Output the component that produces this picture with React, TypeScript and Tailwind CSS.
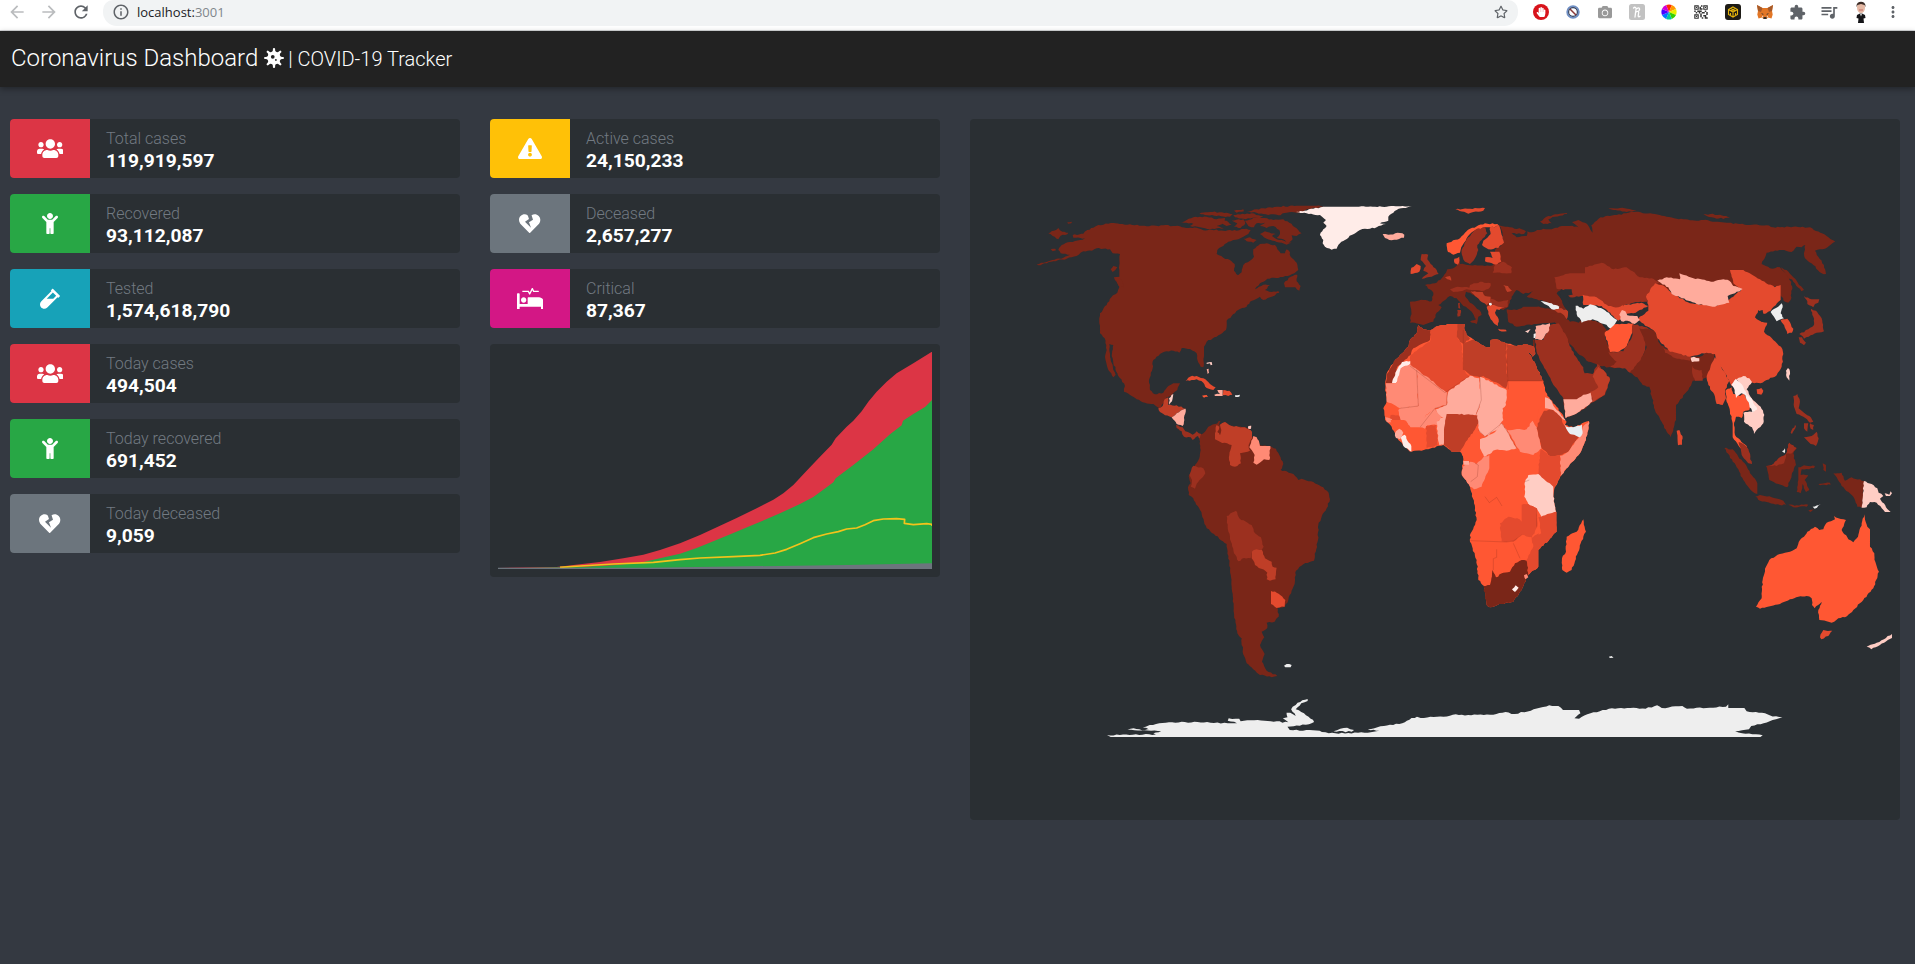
import React from "react";
import {
  FaUsers,
  FaChild,
  FaVial,
  FaHeartBroken,
  FaExclamationTriangle,
  FaProcedures,
  FaVirus,
  FaRegStar,
  FaCamera,
  FaHandPaper,
} from "react-icons/fa";
import { MdArrowBack, MdArrowForward, MdRefresh, MdInfoOutline, MdMoreVert, MdQueueMusic, MdQrCode2, MdExtension } from "react-icons/md";

const A = "#7a2618";
const B = "#9c301f";
const C = "#bf3e27";
const D = "#e44a2e";
const E = "#ff5733";
const F = "#ff8a75";
const G = "#ffab9c";
const H = "#ffcdc4";
const I = "#ffece8";
const W = "#eeeeee";
const SEA = "#2a2f33";

type Shape = [fill: string, points: string];
type Zone = { x: number; y: number; k: string; shapes: Shape[] };

const zones: Zone[] = [
  {
    x: 1030, y: 190, k: "0.3333",
    shapes: [
      [A, "85,180 95,165 120,156 150,150 165,145 130,143 128,135 160,131 172,120 190,113 205,105 250,99 270,102 300,103 350,109 400,106 450,109 475,114 500,113 520,121 545,119 580,122 600,120 620,122 650,116 662,120 655,132 640,140 625,148 595,155 575,170 562,180 560,192 580,203 600,210 614,222 612,242 624,256 635,247 640,225 660,212 672,200 670,178 690,162 710,160 735,165 742,178 752,190 765,190 770,178 777,182 782,200 800,218 805,240 780,256 745,264 712,266 690,280 675,298 700,284 720,285 705,300 725,306 745,303 748,308 720,322 700,330 690,320 660,335 650,350 630,357 605,378 590,392 588,420 560,440 530,455 522,470 522,500 520,532 512,530 503,512 500,490 480,477 455,474 448,488 430,482 410,484 390,492 370,510 368,535 357,570 360,600 375,613 400,608 415,588 430,580 450,580 442,600 425,615 410,622 400,640 388,655 370,642 345,638 320,628 282,605 285,588 262,550 250,520 246,490 250,465 238,462 240,500 248,525 250,540 257,555 250,562 235,540 225,500 230,480 224,445 210,430 208,400 210,370 230,345 244,322 262,308 268,292 262,280 252,262 268,260 268,240 270,192 248,190 240,178 220,176 200,175 186,182 160,184 140,198 110,206 70,214 25,226 20,223 60,212 100,203 120,194 92,190"],
      [A, "55,130 72,122 85,114 97,125 115,128 112,133 92,137 85,148 68,138"],
      [A, "112,97 126,95 124,100 114,101"],
      [A, "62,178 76,176 78,181 68,184"],
      [A, "242,238 250,228 262,232 256,240 248,246"],
      [A, "255,264 268,264 280,282 280,292 266,288"],
      [A, "450,98 470,90 490,82 530,80 560,88 585,84 580,100 560,108 582,114 540,118 510,112 480,108 490,101"],
      [A, "508,70 540,66 590,68 608,72 600,80 560,78 525,75"],
      [A, "578,92 590,92 605,104 590,108 575,100"],
      [A, "612,62 640,58 642,64 620,68"],
      [A, "610,75 665,70 700,78 690,84 640,86 615,82"],
      [A, "605,92 640,88 646,100 632,114 612,110 622,100"],
      [A, "650,66 680,58 740,50 800,47 860,47 885,50 830,58 815,66 770,68 745,76 700,72 680,68"],
      [A, "645,92 670,84 705,84 730,90 760,88 778,98 795,112 815,130 800,138 785,136 788,148 775,160 760,148 740,144 750,132 748,120 730,108 710,114 690,108 705,98 680,100 672,112 655,108"],
      [A, "640,146 660,142 680,150 670,158 650,154"],
      [A, "690,132 705,124 738,132 726,138 740,148 762,152 785,158 770,164 740,156 710,146"],
      [A, "762,280 782,260 802,254 800,274 812,288 808,302 796,292 765,292"],
      [C, "385,655 398,648 404,628 415,622 415,645 440,646 467,656 440,670 425,682 405,676 390,666"],
      [H, "417,625 430,612 426,634 418,644"],
      [G, "425,682 440,670 467,656 463,690 458,708 440,702"],
      [B, "438,705 458,712 466,724 488,734 500,724 514,732 512,748 504,738 488,750 482,742 462,740 455,724 440,714"],
      [D, "467,573 480,560 500,558 520,565 540,582 557,592 550,600 530,594 520,578 500,568 485,570"],
      [E, "516,617 530,615 534,621 522,623"],
      [G, "562,600 578,600 578,618 555,618 553,614 570,612"],
      [D, "580,600 598,602 607,614 595,618 578,616"],
      [W, "615,616 630,614 628,620 616,621"],
      [H, "530,518 545,516 547,524 542,526 540,520 530,522"],
      [G, "530,538 536,536 537,548 533,552"],
      [G, "655,708 664,707 663,716 656,717"],
      [I, "798,66 850,56 880,50 980,50 1146,48 1120,54 1100,60 1075,80 1075,92 1050,100 1068,102 1040,112 1020,116 990,120 965,135 945,150 930,160 920,176 905,179 885,170 878,160 880,150 870,135 880,118 890,108 880,98 888,90 878,82 870,75 830,70"],
    ],
  },
  {
    x: 1160, y: 400, k: "0.3333",
    shapes: [
      [A, "118,118 122,104 135,95 145,80 165,72 182,62 178,75 195,66 210,78 255,82 270,90 275,110 290,112 300,135 330,138 348,146 358,165 370,192 362,210 380,214 400,222 415,240 425,236 460,246 490,262 506,278 510,298 500,325 485,350 475,375 474,420 462,482 430,493 408,512 404,552 385,600 374,620 352,622 356,650 344,665 320,668 322,684 305,695 313,712 300,735 314,762 306,785 320,812 352,828 335,832 300,825 260,790 248,755 245,715 232,700 222,640 215,560 208,490 200,432 140,385 120,330 95,290 86,285 84,262 92,250 86,228 105,195 118,175 122,150"],
      [C, "170,75 178,80 172,96 180,106 184,90 180,74 195,66 215,78 255,82 276,95 276,115 266,135 270,152 240,160 243,190 225,200 210,195 208,165 215,135 180,125 165,118 165,100"],
      [B, "100,197 130,205 136,220 115,245 105,266 92,260 96,240 88,225"],
      [B, "200,348 228,332 238,355 275,375 285,400 303,412 311,440 305,450 275,455 272,475 252,474 235,484 222,460 210,410 203,380"],
      [C, "275,455 290,448 306,450 315,475 335,485 338,500 350,503 347,538 330,542 320,538 322,518 285,495 275,475"],
      [D, "333,573 350,578 376,600 374,620 350,624 333,612"],
      [F, "280,108 290,112 298,128 300,138 331,138 328,180 312,178 290,194 280,188 284,165 275,150 268,142 274,122"],
      [H, "264,80 273,77 272,86 265,86"],
      [W, "372,797 380,792 395,795 392,802 376,802"],
    ],
  },
  {
    x: 1370, y: 190, k: "0.3333",
    shapes: [
      [A, "385,106 420,112 455,118 468,124 462,132 425,130 440,142 470,138 472,124 490,126 520,116 545,118 575,108 600,108 625,112 606,96 625,90 645,98 658,112 668,128 664,106 680,92 692,82 740,75 790,66 855,72 890,80 920,86 980,92 1000,90 1050,96 1110,102 1190,106 1210,112 1270,110 1320,112 1370,138 1396,155 1380,166 1365,176 1335,182 1345,200 1362,225 1368,252 1355,250 1330,225 1305,205 1302,190 1306,165 1295,172 1280,170 1265,186 1235,180 1190,188 1175,222 1200,235 1230,232 1255,255 1267,290 1262,330 1255,338 1245,335 1235,320 1220,290 1080,300 850,300 600,300 575,296 560,310 575,330 590,345 590,360 560,352 530,335 500,328 470,320 490,304 460,312 440,300 425,320 415,350 400,360 375,355 365,360 350,348 335,330 320,322 300,308 288,305 285,318 300,338 328,360 335,375 325,380 320,402 300,395 318,388 305,365 275,342 260,325 240,318 222,332 205,345 215,352 200,368 190,395 160,405 148,402 120,398 124,365 120,335 160,330 185,334 190,308 165,285 195,280 215,265 228,248 232,238 255,232 262,225 258,205 270,208 270,222 300,226 345,228 370,225 375,180 400,160 395,120"],
      [B, "240,298 262,290 298,293 300,285 330,275 362,280 360,292 342,302 305,300 290,298 270,304 250,306"],
      [C, "225,262 240,258 244,272 232,268"],
      [C, "302,304 320,306 338,306 345,318 362,320 362,336 350,345 330,332 315,318"],
      [B, "362,326 385,335 415,330 412,352 380,352 365,342"],
      [D, "350,350 365,345 385,350 405,352 388,360 380,358 375,368 386,388 384,408 374,402 362,388 355,372"],
      [W, "357,339 364,338 366,344 361,347 357,344"],
      [D, "384,416 408,419 410,424 388,422"],
      [C, "400,285 414,288 426,302 412,306"],
      [E, "230,160 270,145 285,128 300,116 345,100 382,102 388,108 360,112 345,112 318,120 300,132 290,145 278,165 270,188 250,194 234,186"],
      [B, "318,118 345,112 352,130 335,150 322,165 325,180 315,205 300,222 285,215 278,200 275,180 290,148"],
      [D, "340,152 362,132 360,112 388,108 398,140 402,158 385,174 355,178 336,165"],
      [D, "360,185 388,185 394,215 380,225 370,222 345,214 346,202 368,204"],
      [B, "375,225 400,215 426,232 424,250 368,248"],
      [D, "253,206 268,200 268,212 264,224 254,220"],
      [A, "510,95 535,78 590,69 592,72 555,80 535,88 545,100 520,102"],
      [A, "715,56 750,54 800,62 770,66 730,60"],
      [A, "1000,72 1050,74 1080,84 1040,86 1010,78"],
      [B, "155,192 175,194 172,208 182,222 200,240 206,252 185,260 155,266 175,250 160,242 168,228 152,210"],
      [D, "124,233 140,222 152,228 148,245 122,252"],
      [G, "38,132 55,134 90,129 103,134 102,143 65,151 45,144"],
      [D, "256,58 300,56 345,54 340,62 310,66 295,71"],
      [B, "264,340 270,338 271,356 265,354"],
      [B, "262,360 273,360 271,378 263,380"],
      [A, "410,358 440,360 460,350 500,350 545,358 580,366 590,395 545,398 500,402 470,404 440,410 415,396"],
      [C, "548,358 575,355 596,362 590,388 568,372"],
      [W, "512,333 545,340 568,350 566,357 545,358 530,345"],
      [A, "540,370 572,368 600,395 655,388 690,398 710,420 705,445 722,480 745,510 735,535 690,528 655,515 620,485 590,450 560,405"],
      [B, "553,262 600,250 645,250 645,232 695,218 730,238 770,232 810,262 845,265 868,278 840,300 832,335 790,338 765,345 742,362 700,345 670,325 640,318 600,322 580,300 560,296"],
      [SEA, "568,308 585,298 605,298 608,314 590,320 600,342 618,350 622,378 634,390 626,398 602,394 597,370 580,345"],
      [D, "638,314 680,322 715,348 745,352 758,345 760,378 745,392 730,378 695,348 665,345 640,345"],
      [W, "617,347 640,356 660,343 678,348 700,358 742,390 728,418 702,402 690,398 668,388 635,398 620,372"],
      [E, "704,428 735,403 790,400 786,430 770,470 748,485 720,486"],
      [B, "495,450 520,450 542,404 565,400 585,430 605,480 618,500 640,532 644,550 668,552 682,522 700,540 720,568 705,615 670,636 630,665 587,685 580,625 555,590 530,545 502,492"],
      [C, "668,560 685,530 700,540 720,568 705,612 670,636 660,606 685,592"],
      [G, "580,628 620,628 640,614 662,608 668,634 630,664 587,685"],
      [G, "497,408 540,400 538,420 515,450 495,448"],
      [W, "491,432 497,430 496,444 491,444"],
      [A, "489,450 494,448 494,480 490,478"],
      [H, "465,424 482,418 474,429"],
    ],
  },
  {
    x: 1600, y: 190, k: "0.3333",
    shapes: [
      [B, "25,487 70,484 96,440 98,402 140,412 158,425 140,450 130,500 115,540 90,548 75,535 30,532 50,515"],
      [A, "118,415 165,420 175,455 195,475 270,500 300,500 320,488 345,492 340,515 330,540 322,562 302,570 278,572 265,600 228,645 228,690 212,742 200,725 165,660 148,590 128,585 112,562 90,548 122,510 140,470"],
      [B, "190,475 230,488 272,500 270,512 225,504 195,488"],
      [B, "275,525 285,538 305,540 308,572 285,572 278,555"],
      [D, "145,345 138,320 150,300 165,280 195,290 215,310 270,340 350,348 400,320 425,298 400,280 390,240 430,240 480,268 525,292 542,285 542,330 512,362 490,372 475,360 465,382 485,395 502,398 492,425 520,450 543,470 550,492 545,530 530,556 500,570 482,580 450,578 430,560 410,572 395,588 375,550 350,515 345,492 320,488 270,500 210,485 172,445 165,425 125,398 115,385 145,362"],
      [SEA, "466,382 478,374 476,364 488,360 492,374 512,378 512,388 504,396 486,396"],
      [G, "172,272 200,262 240,268 238,250 280,265 340,275 370,268 388,272 400,288 428,297 405,310 383,318 388,338 345,350 290,342 240,322 215,312 205,292"],
      [D, "72,345 125,338 145,348 100,370 60,372"],
      [G, "58,374 66,360 76,364 82,376 112,378 120,390 104,402 82,392 64,394"],
      [H, "272,503 282,500 298,505 298,514 276,516"],
      [W, "512,366 528,354 545,340 548,352 542,370 552,385 530,394 522,380"],
      [D, "542,390 562,386 580,416 576,428 562,432 554,412"],
      [B, "612,318 635,328 658,328 655,338 645,342 640,352 622,342 622,334"],
      [B, "633,356 648,362 665,385 672,424 650,428 632,436 612,446 604,436 598,432 625,418 642,405 640,380"],
      [B, "596,442 606,442 618,458 612,466 600,458"],
      [A, "543,232 560,240 580,262 612,300 604,304 580,275 560,255"],
      [H, "558,542 564,534 570,545 568,572 560,562"],
      [D, "470,598 484,594 490,602 484,614 472,612"],
      [D, "325,545 345,500 358,515 368,540 388,572 376,598 378,625 368,645 350,642 345,620 325,585 320,565"],
      [E, "378,600 395,592 400,612 420,618 432,612 452,645 448,660 430,665 425,684 408,680 402,705 405,735 415,745 440,768 445,780 425,778 398,742 398,700 390,665 380,635"],
      [H, "410,568 430,558 448,565 456,576 440,598 455,625 482,650 493,675 490,700 475,715 462,732 456,712 432,695 430,668 462,665 455,635 435,605"],
      [I, "394,584 408,566 430,590 440,612 458,632 472,658 458,668 448,645 436,616 424,610 408,624 404,600"],
      [D, "230,722 238,720 248,745 246,764 234,766"],
      [B, "580,618 592,612 600,635 596,655 612,668 628,678 640,695 630,698 610,680 590,672 582,650"],
      [B, "612,700 625,700 622,725 612,715"],
      [B, "630,700 642,705 640,720 632,716"],
      [B, "612,742 635,738 650,725 656,745 648,768 632,762 620,750"],
      [B, "572,728 585,705 588,708 576,732"],
    ],
  },
  {
    x: 1370, y: 340, k: "0.3333",
    shapes: [
      [E, "145,-45 160,-32 182,-30 205,-42 240,-48 285,-48 284,-30 290,-15 310,-2 345,20 360,22 362,0 380,-2 408,10 440,18 470,12 492,20 496,42 488,50 475,35 500,80 520,122 525,150 540,178 560,200 590,245 585,255 610,262 657,243 655,270 648,300 630,340 600,372 575,405 555,440 550,470 558,515 560,575 545,592 505,630 505,680 475,705 455,750 430,785 395,792 360,802 350,795 342,738 325,720 320,660 300,605 302,580 320,540 312,490 300,440 275,405 280,350 270,335 245,335 220,315 175,328 120,335 85,300 65,260 45,240 40,205 50,185 45,130 50,100 75,60 90,45 115,20 120,0 140,-20"],
      [B, "145,-45 160,-32 182,-30 180,0 130,25 122,45 100,65 82,80 70,130 46,130 52,100 75,60 90,45 115,20 120,0 140,-20"],
      [I, "96,66 122,63 118,76 98,82 90,95 90,112 78,130 66,130 76,98"],
      [D, "182,-30 205,-42 240,-48 262,-48 260,-10 275,15 280,90 298,108 235,155 225,158 120,78 122,45 180,5"],
      [C, "262,-48 285,-48 284,-30 290,-15 300,-5 280,12 270,5 260,-10"],
      [C, "280,12 310,-2 345,20 360,22 362,0 380,-2 408,10 410,80 415,148 340,108 330,112 300,105 280,90"],
      [C, "410,12 440,18 470,12 492,20 496,42 488,50 475,35 500,80 520,123 412,123"],
      [E, "415,123 520,123 525,170 505,215 495,260 470,265 420,268 398,225 400,200 408,150"],
      [G, "330,110 410,150 408,195 398,205 400,240 380,270 345,290 325,270 318,225 330,200"],
      [G, "235,155 300,107 328,115 334,180 318,225 270,228 250,222 230,238 205,225 198,208 230,195"],
      [F, "140,88 232,158 230,195 195,205 165,230 150,262 120,262 108,245 90,240 85,210 95,202 145,198"],
      [F, "120,72 142,90 145,198 90,205 50,185 48,130 78,130 92,85"],
      [D, "62,225 85,226 92,240 60,240"],
      [F, "45,232 66,238 68,248 50,246"],
      [E, "62,240 108,242 122,264 165,265 168,325 120,333 98,275 75,280"],
      [F, "148,262 160,235 195,205 215,232 200,255 172,256 165,266"],
      [D, "168,258 198,255 203,316 170,324"],
      [G, "200,245 230,222 228,270 220,314 208,316 202,280"],
      [C, "230,222 262,222 322,226 325,250 300,290 285,310 270,335 245,335 222,315 222,270"],
      [I, "92,292 104,284 124,318 124,335 100,318"],
      [G, "75,280 88,266 100,278 90,298 78,294"],
      [E, "325,250 328,290 335,320 340,364 282,362 275,332 300,295"],
      [G, "330,298 370,280 395,250 412,275 440,325 410,332 375,330 360,342 342,350 330,325"],
      [F, "412,270 470,268 488,242 500,262 515,325 490,345 450,335 430,300"],
      [C, "522,212 545,208 570,225 582,255 600,278 628,288 595,335 570,345 540,348 515,325 500,265 512,230"],
      [G, "525,172 540,178 560,210 588,242 578,238 550,210 525,205"],
      [F, "657,243 655,270 648,300 630,340 600,372 572,408 570,348 595,335 628,290 638,262"],
      ["#e9eef2", "582,252 590,260 610,262 636,254 638,280 630,292 600,282"],
      [D, "512,328 540,348 570,345 572,405 552,445 505,402 508,360"],
      [H, "475,405 505,402 550,440 550,470 558,515 545,528 515,532 500,505 475,492 463,470 465,425"],
      [F, "278,380 300,365 320,372 340,352 358,345 358,385 335,440 312,448 300,440 276,405"],
      [G, "280,363 297,363 297,374 281,374"],
      [D, "455,494 475,492 500,505 502,560 482,600 460,585 432,605 395,604 390,550 415,530 442,535 455,545"],
      [D, "505,532 560,515 560,575 545,592 505,630 505,680 475,705 470,660 490,620 482,595 512,575"],
      [E, "430,605 455,585 485,592 485,625 470,658 450,655"],
      [E, "500,535 507,540 514,580 506,584"],
      [A, "340,738 360,735 368,690 378,712 400,698 420,695 435,670 455,660 470,662 475,705 455,750 430,785 395,792 360,802 350,795"],
      [F, "462,706 470,702 475,712 466,718"],
      [I, "426,748 437,736 446,743 435,756"],
      [E, "640,538 648,575 640,590 605,690 590,698 577,690 576,655 588,635 590,590 620,575"],
    ],
  },
  {
    x: 1680, y: 380, k: "0.3333",
    shapes: [
      [A, "133,204 158,208 175,230 198,255 215,285 232,310 232,342 218,335 190,300 170,262"],
      [B, "176,186 190,192 205,208 216,252 205,250 185,225"],
      [A, "226,350 240,345 275,352 310,362 318,374 300,375 240,362"],
      [A, "325,374 350,376 385,374 380,380 340,382"],
      [A, "385,392 402,386 392,396"],
      [A, "258,258 275,255 300,232 318,222 328,188 350,204 340,220 348,255 335,285 322,322 295,312 268,300 264,278"],
      [B, "262,255 275,255 300,232 318,222 328,188 350,204 336,220 318,222 312,250 290,258"],
      [W, "306,214 315,205 314,220"],
      [A, "355,262 372,256 405,258 402,265 365,268 362,285 385,286 374,300 388,330 378,336 368,312 362,340 350,336 355,300"],
      [A, "428,250 438,255 438,275 430,270"],
      [A, "415,312 450,308 452,314 420,316"],
      [A, "460,280 485,278 495,302 515,292 552,303 547,383 532,380 520,350 485,318 470,292"],
      [H, "552,303 575,312 592,325 596,338 610,348 600,356 618,382 632,396 615,396 590,368 570,366 560,382 545,383"],
      [H, "614,340 628,344 632,334 636,340 630,348 618,348"],
      [W, "398,380 422,373 404,386"],
      [E, "228,680 245,655 248,600 258,560 268,540 300,522 330,515 350,505 360,480 372,470 382,455 405,440 418,450 430,448 440,428 465,418 462,408 475,415 498,420 485,450 505,478 520,487 534,470 545,430 553,403 562,440 570,448 570,500 583,520 586,545 597,575 580,625 550,660 520,690 495,712 475,715 455,728 440,724 418,720 415,690 425,665 404,685 396,675 395,655 380,648 355,650 330,658 300,672 240,686"],
      [D, "430,750 457,752 445,768 424,778 420,772"],
      [H, "560,800 590,788 612,778 636,762 636,774 600,795 574,808"],
    ],
  },
  {
    x: 1090, y: 680, k: "0.4592 0.3333",
    shapes: [
      [W, "37,165 100,163 150,164 138,160 155,154 75,150 95,145 120,150 135,147 115,143 130,135 165,128 255,126 300,130 320,130 300,122 302,115 325,116 328,124 350,121 380,122 400,125 432,127 420,115 430,112 428,98 436,98 448,108 438,88 452,68 474,57 474,63 460,70 448,88 460,96 476,110 488,126 470,134 430,140 435,150 500,152 505,156 520,160 605,158 630,152 605,148 640,138 680,130 690,122 712,110 720,114 770,110 790,104 830,106 885,102 905,96 925,102 960,92 1000,76 1020,78 1030,90 1065,90 1068,100 1055,115 1065,116 1090,100 1130,86 1170,84 1210,86 1235,76 1245,84 1290,78 1300,86 1385,80 1390,73 1390,84 1425,84 1430,94 1470,100 1480,106 1508,112 1480,124 1440,138 1435,148 1405,154 1420,160 1465,166 1460,171 45,171"],
      [W, "530,154 545,146 560,143 575,150 570,155"],
      [W, "1130,-70 1136,-72 1140,-67 1132,-66"],
    ],
  },
];

const borders =
  "M140,90 145,198 90,205 M120,78 225,158 298,108 M280,-30 280,90 M408,12 415,148 M330,112 334,180 318,225 M232,158 230,195 195,205 150,262 M325,270 345,290 395,250 412,275 440,325 M412,123 520,123 M315,370 325,375 322,410 302,425 M345,470 358,488 380,472 396,498 M302,602 410,606 430,603 455,585 M380,628 380,652 370,656 370,690 M430,610 450,655 M500,505 500,560 M465,425 478,420";

// Deterministic value in [-1, 1] for a position, so that two countries sharing an edge get the same wobble.
function noise(x: number, y: number) {
  const v = Math.sin(x * 12.9898 + y * 78.233) * 43758.5453;
  return (v - Math.floor(v)) * 2 - 1;
}

// Breaks long diagonal edges into short uneven steps for a natural coastline; axis-aligned borders stay straight.
function roughen(points: string) {
  const pts = points.split(" ").map((p) => p.split(",").map(Number));
  const out: string[] = [];
  pts.forEach(([ax, ay], i) => {
    const [bx, by] = pts[(i + 1) % pts.length];
    const dx = bx - ax;
    const dy = by - ay;
    const len = Math.hypot(dx, dy);
    out.push(`${ax},${ay}`);
    if (len < 12 || Math.abs(dx) < 1 || Math.abs(dy) < 1) return;
    const steps = Math.round(len / 7);
    const flip = ax < bx || (ax === bx && ay < by) ? 1 : -1;
    for (let s = 1; s < steps; s++) {
      const x = ax + (dx * s) / steps;
      const y = ay + (dy * s) / steps;
      const o = noise(Math.round(x), Math.round(y)) * 1.9 * flip;
      out.push(`${(x - (dy / len) * o).toFixed(1)},${(y + (dx / len) * o).toFixed(1)}`);
    }
  });
  return out.join(" ");
}

function WorldMap() {
  return (
    <svg viewBox="978 127 914 685" className="block h-[685px] w-full">
      {zones.map((z, i) => (
        <g key={i} transform={`translate(${z.x} ${z.y}) scale(${z.k})`}>
          {z.shapes.map(([fill, points], j) => (
            <polygon key={j} points={roughen(points)} fill={fill} />
          ))}
        </g>
      ))}
      <path transform="translate(1370 340) scale(.33333)" d={borders} fill="none" stroke="#7a2618" strokeOpacity=".5" strokeWidth="1.3" />
    </svg>
  );
}

function TrendChart() {
  return (
    <svg viewBox="54 756 1302 651" className="block h-[217px] w-full">
      <path fill="#dc3545" d="M54,1404 L230,1401 300,1393 360,1386 430,1375 490,1364 540,1350 600,1330 660,1305 720,1277 770,1254 830,1225 880,1199 910,1180 940,1155 980,1112 1020,1070 1055,1034 1067,1015 1100,980 1120,962 1145,934 1165,905 1190,875 1220,845 1250,820 1275,805 1300,790 1356,755 V1407 H54Z" />
      <path fill="#28a745" d="M54,1405 L300,1401 400,1396 480,1388 540,1375 600,1361 650,1344 700,1324 760,1299 830,1270 900,1240 960,1212 1000,1191 1040,1162 1060,1147 1067,1135 1120,1095 1180,1048 1230,1003 1265,976 1269,962 1300,942 1335,921 1356,900 V1407 H54Z" />
      <path fill="none" stroke="#f3c31b" strokeWidth="5" strokeLinejoin="round" d="M240,1402 L300,1398 400,1392 520,1387 600,1379 660,1374 760,1370 840,1366 885,1359 920,1348 960,1331 1000,1313 1040,1302 1075,1295 1100,1287 1130,1284 1155,1274 1180,1262 1210,1257 1250,1256 1274,1258 1273,1270 1300,1274 1340,1271 1356,1273 V1278" />
      <path fill="#6c757d" d="M54,1403.500 H500 L800,1399 1100,1395 1356,1390 V1407 H54Z" />
    </svg>
  );
}

type Stat = { label: string; value: string; tone: string; icon: React.ReactNode };

const leftStats: Stat[] = [
  { label: "Total cases", value: "119,919,597", tone: "bg-[#dc3545]", icon: <FaUsers className="h-[21.33px] w-[26.67px]" /> },
  { label: "Recovered", value: "93,112,087", tone: "bg-[#28a745]", icon: <FaChild className="h-[21.33px] w-4" /> },
  { label: "Tested", value: "1,574,618,790", tone: "bg-[#17a2b8]", icon: <FaVial className="h-[21.33px] w-[20px]" /> },
  { label: "Today cases", value: "494,504", tone: "bg-[#dc3545]", icon: <FaUsers className="h-[21.33px] w-[26.67px]" /> },
  { label: "Today recovered", value: "691,452", tone: "bg-[#28a745]", icon: <FaChild className="h-[21.33px] w-4" /> },
  { label: "Today deceased", value: "9,059", tone: "bg-[#6c757d]", icon: <FaHeartBroken className="h-[21.33px] w-[21.33px]" /> },
];

const rightStats: Stat[] = [
  { label: "Active cases", value: "24,150,233", tone: "bg-[#ffc107]", icon: <FaExclamationTriangle className="h-[21.33px] w-6" /> },
  { label: "Deceased", value: "2,657,277", tone: "bg-[#6c757d]", icon: <FaHeartBroken className="h-[21.33px] w-[21.33px]" /> },
  { label: "Critical", value: "87,367", tone: "bg-[#d31785]", icon: <FaProcedures className="h-[21.33px] w-[26.67px]" /> },
];

function StatCard({ label, value, tone, icon }: Stat) {
  return (
    <div className="flex h-[59px] overflow-hidden rounded bg-[#2a2f33]">
      <div className={`flex w-20 items-center justify-center text-white ${tone}`}>{icon}</div>
      <div className="flex flex-col pl-4 pt-2">
        <span className="text-base leading-6 font-light text-[#727a82]">{label}</span>
        <span className="-mt-0.5 text-[19.2px] leading-6 font-bold text-white">{value}</span>
      </div>
    </div>
  );
}

const wheel = ["#ff2a00", "#ff9a00", "#e8f000", "#35d000", "#00c8a0", "#0078ff", "#4b00ff", "#d000d8"];

function BrowserBar() {
  return (
    <div className="flex h-[31px] shrink-0 items-start overflow-hidden border-b border-[#d5d7da] bg-white text-[#5f6368]">
      <div className="flex h-6 w-[103px] shrink-0 items-center gap-3 pl-[7px]">
        <MdArrowBack className="size-5 text-[#babcbe]" />
        <MdArrowForward className="size-5 text-[#babcbe]" />
        <MdRefresh className="size-5" />
      </div>
      <div className="flex h-[26px] w-[1415px] shrink-0 items-center rounded-b-[14px] rounded-t-[10px] bg-[#f1f3f4] pb-0.5 pl-[9px] pr-[10px]">
        <MdInfoOutline className="size-[18px]" />
        <span className="ml-[7px] flex-1 font-['Open_Sans','Noto_Sans',sans-serif] text-[13px] leading-4 text-[#202124]">
          localhost:<span className="text-[#80868b]">3001</span>
        </span>
        <FaRegStar className="size-[14px]" />
      </div>
      <div className="ml-[7px] flex h-6 items-center *:flex *:w-8 *:justify-center">
        <div>
          <span className="flex size-4 items-center justify-center rounded-full bg-[#d8131b] text-white">
            <FaHandPaper className="size-2.5" />
          </span>
        </div>
        <div>
          <svg viewBox="0 0 16 16" className="size-4">
            <circle cx="8" cy="8" r="5.800" fill="#fff" stroke="#6f8fc4" strokeWidth="1.800" />
            <circle cx="8" cy="8" r="4.400" fill="none" stroke="#33415f" strokeWidth="1.200" />
            <path d="M5 5l6 6" stroke="#8c3a3a" strokeWidth="1.500" />
          </svg>
        </div>
        <div><FaCamera className="size-[14px] text-[#999]" /></div>
        <div>
          <svg viewBox="0 0 16 16" className="size-4">
            <rect width="16" height="16" rx="2.500" fill="#c2c2c2" />
            <path d="M4.500 4c1.500-1.500 3-.5 2.500 1.500L6 13M6.300 9C8 6.500 10 7 9.600 9l-.4 3c0 1 1 1 1.800.2M8 4.500c2-1.500 3.500 0 2 2" fill="none" stroke="#fff" strokeWidth="1.300" strokeLinecap="round" />
          </svg>
        </div>
        <div>
          <svg viewBox="-8 -8 16 16" className="size-4">
            {wheel.map((c, i) => (
              <path key={c} d="M0 0L-2.900 -7A7.500 7.500 0 0 1 2.900 -7Z" fill={c} transform={`rotate(${i * 45})`} />
            ))}
          </svg>
        </div>
        <div><MdQrCode2 className="size-[18px] text-[#333]" /></div>
        <div>
          <svg viewBox="0 0 16 16" className="size-4">
            <rect width="16" height="16" rx="3" fill="#1d1b16" />
            <path d="M8 3l4.500 2.500v5L8 13l-4.500-2.500v-5zM3.500 5.500L8 8l4.500-2.500M8 8v5M5.500 4.300L10 7M10.500 4.300L6 7M5.500 9v2M10.500 9v2" fill="none" stroke="#e5b40c" strokeWidth="1.100" />
          </svg>
        </div>
        <div>
          <svg viewBox="0 0 16 16" className="size-4">
            <path d="M0 1l5.500 3h5L16 1l-1 6 .7 3.500-1.200 4-3.500-1L9.500 15h-3L5 13.500l-3.500 1-1.200-4L1 7z" fill="#e27625" />
            <path d="M0 1l5.500 3L4 8 1 7zM16 1l-5.500 3L12 8l3-1z" fill="#a65a2a" />
            <path d="M6.500 13h3V15h-3zM4 9l2.500 1-.5 1zM12 9l-2.500 1 .5 1z" fill="#32302d" />
            <path d="M5 11.500l1.500 1.500L5 13.500zM11 11.500L9.500 13l1.500.5z" fill="#e9dccd" />
          </svg>
        </div>
        <div><MdExtension className="size-[17px]" /></div>
        <div><MdQueueMusic className="size-5" /></div>
        <div>
          <svg viewBox="0 0 12 22" className="h-[22px] w-3">
            <ellipse cx="6" cy="6.500" rx="4" ry="5.500" fill="#e5b9a5" />
            <path d="M1.500 6C0.500 -1 11.500 -1 10.500 6L9.500 4 6 3 2.500 4z" fill="#3a2a25" />
            <path d="M4 9h4" stroke="#b55" strokeWidth=".8" />
            <path d="M2 14l4-2 4 2 .5 3-2 .5.500 4.500H3l.500-4.500-2-.5z" fill="#151518" />
            <path d="M5 12.500h2l-1 3z" fill="#fff" />
          </svg>
        </div>
        <div><MdMoreVert className="size-[18px]" /></div>
      </div>
    </div>
  );
}

export default function App() {
  return (
    <div className="flex h-[964px] w-full flex-col overflow-hidden bg-[#343941] font-[Roboto,sans-serif]">
      <BrowserBar />
      <header className="flex h-14 shrink-0 items-center bg-[#222] pb-0.5 pl-[11px] font-light text-white shadow-[0_2px_6px_rgba(0,0,0,0.35)]">
        <div className="flex items-baseline whitespace-pre">
          <span className="text-2xl leading-9">Coronavirus Dashboard</span>
          <FaVirus className="ml-[6px] mr-[4px] size-[20px] self-center" />
          <span className="text-xl leading-9">| COVID-19 Tracker</span>
        </div>
      </header>
      <main className="flex items-start gap-[30px] pl-[10px] pt-8">
        <section className="flex w-[450px] flex-col gap-4">
          {leftStats.map((s) => (
            <StatCard key={s.label} {...s} />
          ))}
        </section>
        <section className="flex w-[450px] flex-col gap-4">
          {rightStats.map((s) => (
            <StatCard key={s.label} {...s} />
          ))}
          <div className="h-[233px] rounded bg-[#2a2f33] p-2">
            <TrendChart />
          </div>
        </section>
        <section className="h-[701px] w-[930px] rounded bg-[#2a2f33] p-2">
          <WorldMap />
        </section>
      </main>
    </div>
  );
}
